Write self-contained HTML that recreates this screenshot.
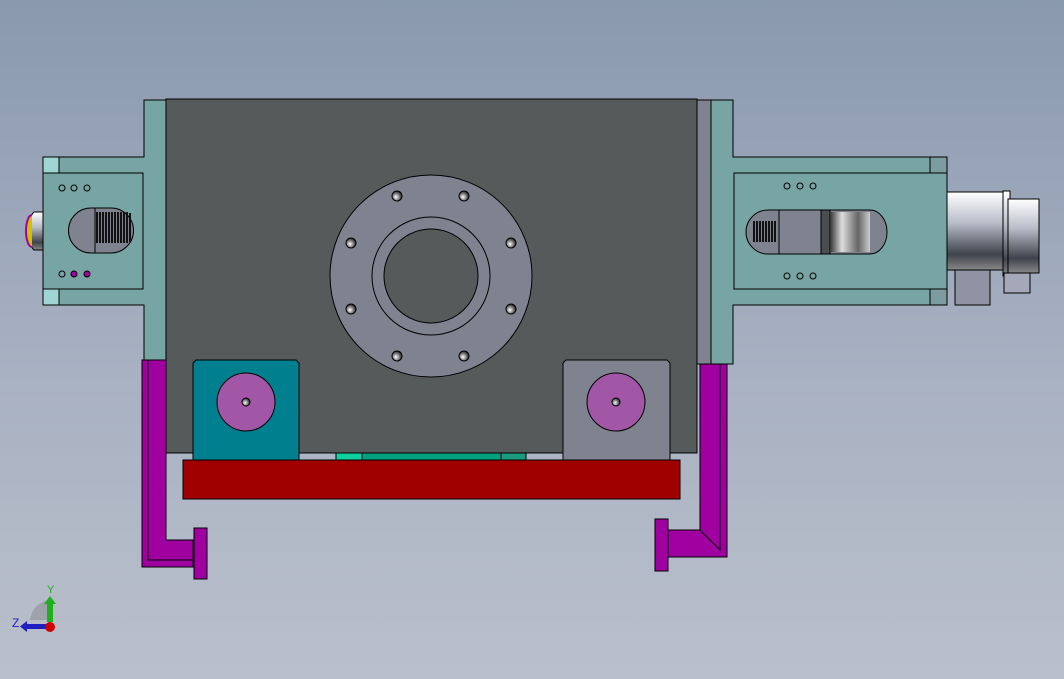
<!DOCTYPE html>
<html><head><meta charset="utf-8"><style>
html,body{margin:0;padding:0;}
body{width:1064px;height:679px;overflow:hidden;background:linear-gradient(#8a99ae,#a8b1c2 55%,#bac0cb);}
svg{display:block}
</style></head><body>
<svg width="1064" height="679" viewBox="0 0 1064 679" xmlns="http://www.w3.org/2000/svg" stroke="#000" stroke-width="1">
<defs>
<linearGradient id="met" x1="0" y1="0" x2="0" y2="1"><stop offset="0" stop-color="#fff"/><stop offset=".4" stop-color="#b8bcc8"/><stop offset=".8" stop-color="#40424c"/><stop offset="1" stop-color="#888"/></linearGradient>
<linearGradient id="met2" x1="0" y1="0" x2="1" y2="0"><stop offset="0" stop-color="#333"/><stop offset=".3" stop-color="#ddd"/><stop offset=".7" stop-color="#666"/><stop offset="1" stop-color="#ccc"/></linearGradient>
<radialGradient id="bolt" cx=".4" cy=".6" r=".6"><stop offset="0" stop-color="#fff"/><stop offset=".6" stop-color="#777"/><stop offset="1" stop-color="#222"/></radialGradient>
</defs>
<path d="M142 360H166V540H193V567H142Z" fill="#a0009f"/>
<path d="M148 360V560H193" fill="none"/>
<rect x="194" y="528" width="13" height="51" fill="#a0009f"/>
<path d="M700 364H727V557H668V530H700Z" fill="#a0009f"/>
<path d="M720 364V550L700 530" fill="none"/>
<rect x="655" y="519" width="13" height="52" fill="#a0009f"/>
<path d="M144 100H166V360H144V305H43V157H144Z" fill="#77a5a3"/>
<rect x="43" y="173" width="100" height="116" fill="#77a5a3"/>
<rect x="43" y="157" width="16" height="16" fill="#9fd6d3"/>
<rect x="43" y="289" width="16" height="16" fill="#9fd6d3"/>
<path d="M91 208H111A22 22 0 0 1 111 253H91A22 22 0 0 1 91 208Z" fill="#7f8390"/>
<line x1="95" y1="208" x2="95" y2="253"/>
<g stroke="#111" stroke-width="2"><path d="M97 212V243M100 212V243M103 212V243M106 212V243M109 212V243M112 212V243M115 212V243M118 212V243M121 212V243M124 212V243M127 212V243M130 213V242"/></g>
<g fill="none"><circle cx="62" cy="188" r="3"/><circle cx="74" cy="188" r="3"/><circle cx="87" cy="188" r="3"/><circle cx="62" cy="274" r="3"/></g>
<circle cx="74" cy="274" r="3" fill="#a0009f"/><circle cx="87" cy="274" r="3" fill="#a0009f"/>
<path d="M43 212H34A8 20 0 0 0 34 250H43Z" fill="url(#met)"/>
<path d="M32 215A6 16 0 0 0 32 247" fill="#d0c000" stroke="#a0009f" stroke-width="2"/>
<rect x="697" y="100" width="14" height="264" fill="#7f8390"/>
<path d="M711 100H733V157H947V305H733V364H711Z" fill="#77a5a3"/>
<rect x="734" y="173" width="213" height="116" fill="#77a5a3"/>
<rect x="930" y="157" width="17" height="16" fill="#7c9ca0"/>
<rect x="930" y="289" width="17" height="16" fill="#7c9ca0"/>
<path d="M768 210H870A17 22 0 0 1 870 254H768A22 22 0 0 1 768 210Z" fill="#7f8390"/>
<line x1="779" y1="210" x2="779" y2="254"/>
<g stroke="#111" stroke-width="2"><path d="M754 221V242M757 221V242M760 221V242M763 221V242M766 221V242M769 221V242M772 221V242M775 221V242"/></g>
<rect x="821" y="210" width="9" height="44" fill="#4a4d52"/>
<rect x="830" y="212" width="40" height="40" fill="url(#met2)" stroke="none"/>
<g fill="none"><circle cx="787" cy="186" r="3"/><circle cx="800" cy="186" r="3"/><circle cx="813" cy="186" r="3"/><circle cx="787" cy="276" r="3"/><circle cx="800" cy="276" r="3"/><circle cx="813" cy="276" r="3"/></g>
<rect x="947" y="192" width="56" height="78" fill="url(#met)"/>
<rect x="1003" y="191" width="7" height="85" fill="url(#met)"/>
<rect x="1008" y="199" width="31" height="74" fill="url(#met)"/>
<rect x="955" y="270" width="35" height="35" fill="#8f93a4"/>
<rect x="1004" y="273" width="26" height="20" fill="#a4a8b8"/>
<rect x="166" y="99" width="531" height="354" fill="#555a5b"/>
<circle cx="431" cy="276" r="101" fill="#7f8390"/>
<circle cx="431" cy="276" r="59" fill="#7f8390"/>
<circle cx="431" cy="276" r="47" fill="#555a5b"/>
<g fill="url(#bolt)">
<circle cx="397" cy="196" r="5"/><circle cx="464" cy="196" r="5"/><circle cx="351" cy="243" r="5"/><circle cx="511" cy="243" r="5"/>
<circle cx="351" cy="309" r="5"/><circle cx="511" cy="309" r="5"/><circle cx="397" cy="356" r="5"/><circle cx="464" cy="356" r="5"/></g>
<rect x="336" y="453" width="165" height="7" fill="#05a07e"/>
<rect x="336" y="453" width="26" height="7" fill="#10d0a0"/>
<rect x="501" y="453" width="25" height="7" fill="#1c9a80"/>
<path d="M196 360H296L299 363V460H193V363Z" fill="#00808f"/>
<circle cx="246" cy="402" r="29" fill="#a257a6"/>
<circle cx="246" cy="402" r="4" fill="url(#bolt)"/>
<path d="M566 360H667L670 363V460H563V363Z" fill="#7f8390"/>
<circle cx="616" cy="402" r="29" fill="#a257a6"/>
<circle cx="616" cy="402" r="4" fill="url(#bolt)"/>
<rect x="183" y="460" width="497" height="39" fill="#a00000"/>
<g stroke="none">
<path d="M30 620A22 22 0 0 1 50 600V620Z" fill="#9ea3ab"/>
<rect x="47" y="602" width="6" height="20" fill="#1fb01f"/>
<path d="M44 604L50 596L56 604Z" fill="#1fb01f"/>
<rect x="26" y="624" width="24" height="5" fill="#2020c0"/>
<path d="M27 621L20 626.5L27 632Z" fill="#2020c0"/>
<circle cx="50" cy="627" r="5" fill="#d00000"/>
<text x="47" y="593" font-family="Liberation Sans,sans-serif" font-size="11" fill="#1fb01f">Y</text>
<text x="12" y="627" font-family="Liberation Sans,sans-serif" font-size="12" fill="#2020c0">Z</text>
</g>
</svg>
</body></html>
